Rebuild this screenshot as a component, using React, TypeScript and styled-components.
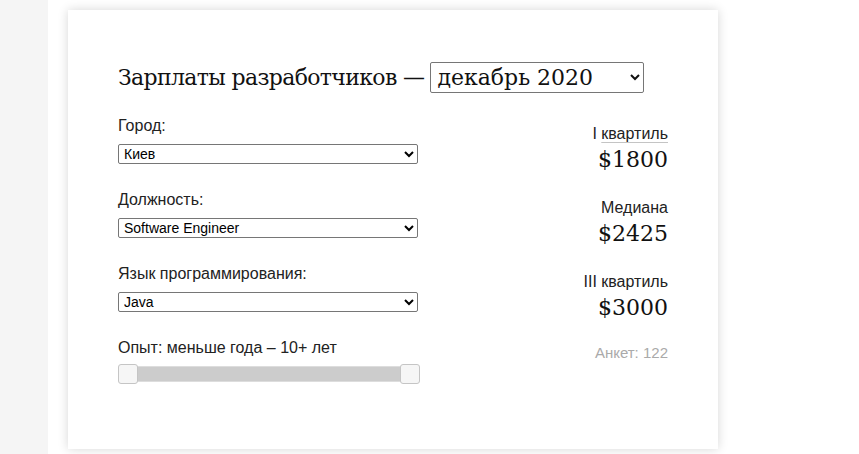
import React from "react";
import styled, { createGlobalStyle } from "styled-components";

const Global = createGlobalStyle`
  html, body { margin: 0; padding: 0; background: #fff; }
  body { font-family: "Liberation Sans", Arial, sans-serif; color: #222; }
`;

const Page = styled.div`
  display: flex;
  align-items: flex-start;
  min-height: 454px;
`;

const Strip = styled.div`
  width: 48px;
  align-self: stretch;
  background: #f5f5f5;
  flex: none;
`;

const Card = styled.div`
  margin: 10px 0 0 20px;
  width: 650px;
  height: 439px;
  box-sizing: border-box;
  background: #fff;
  box-shadow: 0 0 10px rgba(0, 0, 0, 0.16);
  padding: 52px 50px 0 50px;
`;

const TitleRow = styled.div`
  display: flex;
  align-items: center;
  gap: 6px;
  height: 31px;
`;

const Title = styled.h1`
  margin: 0;
  font-family: "DejaVu Serif", "Liberation Serif", serif;
  font-weight: normal;
  font-size: 22px;
  color: #111;
  letter-spacing: -0.65px;
`;

const BigSelect = styled.select`
  width: 214px;
  height: 31px;
  font-family: "DejaVu Serif", "Liberation Serif", serif;
  font-size: 22px;
  color: #111;
  border: 1px solid #767676;
  border-radius: 2px;
  background: #fff;
  padding: 0 2px;
`;

const Body = styled.div`
  display: flex;
  justify-content: space-between;
  margin-top: 24px;
`;

const Left = styled.div`
  width: 300px;
  display: flex;
  flex-direction: column;
`;

const Group = styled.div`
  display: flex;
  flex-direction: column;
  margin-bottom: 27px;
`;

const Label = styled.label`
  font-size: 16px;
  line-height: 18px;
  color: #222;
  margin-bottom: 9px;
`;

const Select = styled.select`
  width: 300px;
  height: 20px;
  font-family: "Liberation Sans", Arial, sans-serif;
  font-size: 14px;
  color: #000;
  border: 1px solid #767676;
  border-radius: 2px;
  background: #fff;
  padding: 0 1px;
`;

const SliderLabel = styled(Label)`
  margin-bottom: 7px;
`;

const Slider = styled.div`
  position: relative;
  width: 302px;
  height: 20px;
  display: flex;
  align-items: center;
`;

const Track = styled.div`
  flex: 1;
  margin: 0 9px;
  height: 14px;
  background: #cccccc;
  border: 1px solid #dddddd;
`;

const Handle = styled.span<{ $pos: "left" | "right" }>`
  position: absolute;
  top: 0;
  ${(p) => (p.$pos === "left" ? "left: 0;" : "right: 0;")}
  width: 18px;
  height: 18px;
  background: #f6f6f6;
  border: 1px solid #c5c5c5;
  border-radius: 3px;
`;

const Right = styled.div`
  display: flex;
  flex-direction: column;
  align-items: flex-end;
  padding-top: 8px;
`;

const Stat = styled.div`
  display: flex;
  flex-direction: column;
  align-items: flex-end;
  margin-bottom: 23px;
`;

const StatLabel = styled.div`
  font-size: 16px;
  line-height: 18px;
  color: #222;
`;

const Dotted = styled.span`
  text-decoration: underline;
  text-decoration-color: #c4c4c4;
  text-decoration-thickness: 1px;
  text-underline-offset: 3px;
`;

const Value = styled.div`
  font-family: "DejaVu Serif", "Liberation Serif", serif;
  font-size: 22px;
  line-height: 32px;
  color: #111;
  margin-top: 1px;
`;

const Count = styled.div`
  font-size: 15px;
  line-height: 18px;
  color: #aaaaaa;
  margin-top: -3px;
`;

export default function App() {
  return (
    <>
      <Global />
      <Page>
        <Strip />
        <Card>
          <TitleRow>
            <Title>Зарплаты разработчиков —</Title>
            <BigSelect defaultValue="dec2020">
              <option value="dec2020">декабрь 2020</option>
            </BigSelect>
          </TitleRow>
          <Body>
            <Left>
              <Group>
                <Label>Город:</Label>
                <Select defaultValue="kiev">
                  <option value="kiev">Киев</option>
                </Select>
              </Group>
              <Group>
                <Label>Должность:</Label>
                <Select defaultValue="se">
                  <option value="se">Software Engineer</option>
                </Select>
              </Group>
              <Group>
                <Label>Язык программирования:</Label>
                <Select defaultValue="java">
                  <option value="java">Java</option>
                </Select>
              </Group>
              <Group>
                <SliderLabel>Опыт: меньше года – 10+ лет</SliderLabel>
                <Slider>
                  <Track />
                  <Handle $pos="left" />
                  <Handle $pos="right" />
                </Slider>
              </Group>
            </Left>
            <Right>
              <Stat>
                <StatLabel>
                  I <Dotted>квартиль</Dotted>
                </StatLabel>
                <Value>$1800</Value>
              </Stat>
              <Stat>
                <StatLabel>Медиана</StatLabel>
                <Value>$2425</Value>
              </Stat>
              <Stat>
                <StatLabel>III квартиль</StatLabel>
                <Value>$3000</Value>
              </Stat>
              <Count>Анкет: 122</Count>
            </Right>
          </Body>
        </Card>
      </Page>
    </>
  );
}
